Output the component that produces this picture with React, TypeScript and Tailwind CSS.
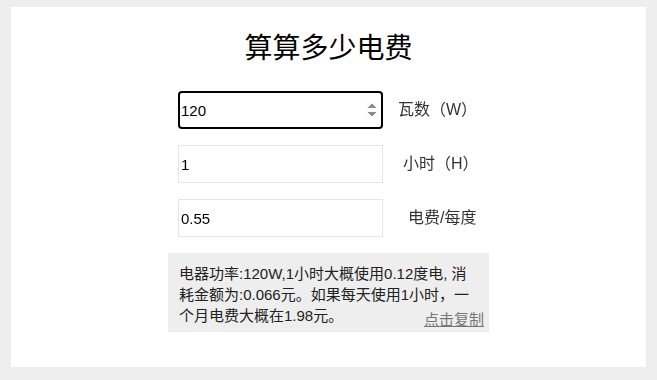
import React from 'react';

const font = { fontFamily: '"Liberation Sans", "Noto Sans CJK SC", sans-serif' };

const App: React.FC = () => {
    return (
        <div className="w-[657px] h-[380px] bg-[#eeeeee] pt-[7px] px-[11px]" style={font}>
            <div className="h-[360px] bg-white pt-[24px]">
                <h1 className="text-center text-[28px] leading-[36px] text-black font-normal">算算多少电费</h1>

                <div className="w-[321px] mx-auto mt-[24px] flex flex-col gap-4">
                    {/* watts */}
                    <div className="flex items-center pl-[10px]">
                        <input
                            type="number"
                            defaultValue={120}
                            autoFocus
                            className="w-[205px] h-[38px] border-2 border-black rounded-[4px] px-[1px] text-[15px] text-black outline-none"
                        />
                        <span className="ml-[15px] text-[16px] text-[#333]">瓦数（W）</span>
                    </div>
                    {/* hours */}
                    <div className="flex items-center pl-[10px]">
                        <input
                            type="text"
                            defaultValue="1"
                            className="w-[205px] h-[38px] border border-[#e6e6e6] px-[2px] text-[15px] text-black outline-none"
                        />
                        <span className="ml-[20px] text-[16px] text-[#333]">小时（H）</span>
                    </div>
                    {/* price */}
                    <div className="flex items-center pl-[10px]">
                        <input
                            type="text"
                            defaultValue="0.55"
                            className="w-[205px] h-[38px] border border-[#e6e6e6] px-[2px] text-[15px] text-black outline-none"
                        />
                        <span className="ml-[25px] text-[16px] text-[#333]">电费/每度</span>
                    </div>

                    {/* result */}
                    <div className="relative bg-[#eeeeee] h-[79px] pl-[11px] pr-[10px] pt-[10px] text-[15px] leading-[21px] text-[#222]">
                        <span>电器功率:120W,1小时大概使用0.12度电, 消耗金额为:0.066元。如果每天使用1小时，一个月电费大概在1.98元。</span>
                        <a className="absolute right-[5px] bottom-[2px] text-[15px] leading-[20px] text-[#777] underline cursor-pointer">点击复制</a>
                    </div>
                </div>
            </div>
        </div>
    );
};

export default App;
